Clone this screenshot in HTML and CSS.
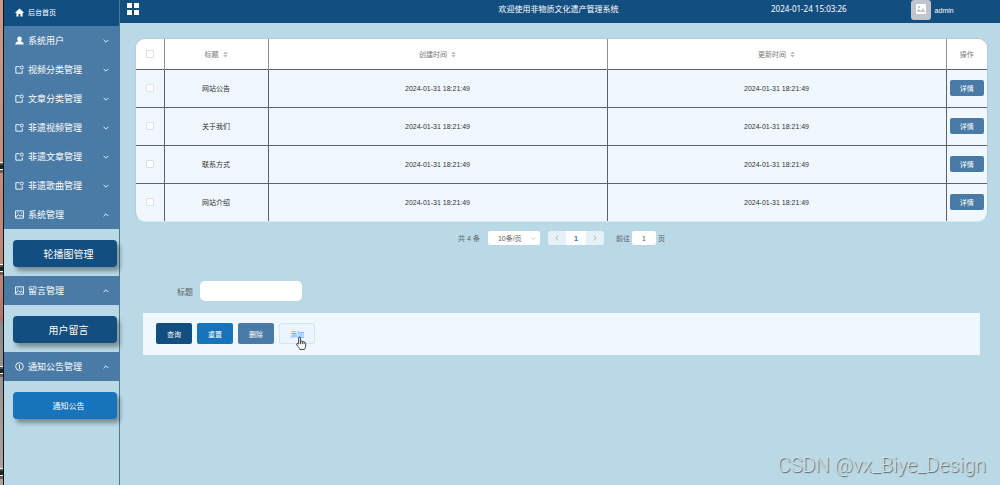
FILE: index.html
```
<!DOCTYPE html>
<html lang="zh-CN">
<head>
<meta charset="utf-8">
<meta name="viewport" content="width=device-width, initial-scale=1">
<title>非物质文化遗产管理系统</title>
<link rel="stylesheet" href="styles.css">
</head>
<body>
<svg class="sprite" aria-hidden="true">
  <symbol id="home" viewBox="0 0 16 16"><path fill="currentColor" d="M8 1 0.8 7.6V9H2.500V15H6.300V10.500H9.700V15H13.500V9H15.200V7.600Z"/></symbol>
  <symbol id="user" viewBox="0 0 16 16"><path fill="currentColor" d="M8 1a4 4 0 0 1 4 4c0 2-.8 3.300-2 4.200 3 .8 5.500 2 5.500 5.800H.5C.5 11.200 3 10 6 9.200 4.800 8.300 4 7 4 5a4 4 0 0 1 4-4Z"/></symbol>
  <symbol id="box" viewBox="0 0 16 16"><path fill="none" stroke="currentColor" stroke-width="1.600" d="M8 3H1.500V14.500H13V9.500"/><circle cx="12" cy="4.500" r="2.700" fill="none" stroke="currentColor" stroke-width="1.600"/></symbol>
  <symbol id="pic" viewBox="0 0 16 16"><path fill="none" stroke="currentColor" stroke-width="1.600" d="M1 1.500H15V14.500H1ZM1.500 12.500 6 8 9 11 11.500 9 14.500 12M4 5H6"/><circle cx="11" cy="5.500" r="1" fill="currentColor"/></symbol>
  <symbol id="info" viewBox="0 0 16 16"><circle cx="8" cy="8" r="6.800" fill="none" stroke="currentColor" stroke-width="1.600"/><path stroke="currentColor" stroke-width="1.800" d="M8 4V12.500"/></symbol>
  <symbol id="down" viewBox="0 0 10 10"><path fill="none" stroke="currentColor" stroke-width="1.400" d="M1 3 5 7 9 3"/></symbol>
  <symbol id="up" viewBox="0 0 10 10"><path fill="none" stroke="currentColor" stroke-width="1.400" d="M1 7 5 3 9 7"/></symbol>
  <symbol id="sort" viewBox="0 0 10 14"><path fill="currentColor" d="M5 1 9.500 6H.5ZM5 13 .5 8H9.500Z"/></symbol>
</svg>
<div class="app">
  <div class="edge"></div>
  <nav class="sidebar">
    <a class="home" href="#"><svg class="icon"><use href="#home"/></svg>后台首页</a>
    <button class="menu"><svg class="icon"><use href="#user"/></svg><span>系统用户</span><svg class="arrow"><use href="#down"/></svg></button>
    <button class="menu"><svg class="icon"><use href="#box"/></svg><span>视频分类管理</span><svg class="arrow"><use href="#down"/></svg></button>
    <button class="menu"><svg class="icon"><use href="#box"/></svg><span>文章分类管理</span><svg class="arrow"><use href="#down"/></svg></button>
    <button class="menu"><svg class="icon"><use href="#box"/></svg><span>非遗视频管理</span><svg class="arrow"><use href="#down"/></svg></button>
    <button class="menu"><svg class="icon"><use href="#box"/></svg><span>非遗文章管理</span><svg class="arrow"><use href="#down"/></svg></button>
    <button class="menu"><svg class="icon"><use href="#box"/></svg><span>非遗歌曲管理</span><svg class="arrow"><use href="#down"/></svg></button>
    <button class="menu"><svg class="icon"><use href="#pic"/></svg><span>系统管理</span><svg class="arrow"><use href="#up"/></svg></button>
    <div class="sub"><a href="#">轮播图管理</a></div>
    <button class="menu"><svg class="icon"><use href="#pic"/></svg><span>留言管理</span><svg class="arrow"><use href="#up"/></svg></button>
    <div class="sub"><a href="#">用户留言</a></div>
    <button class="menu"><svg class="icon"><use href="#info"/></svg><span>通知公告管理</span><svg class="arrow"><use href="#up"/></svg></button>
    <div class="sub"><a class="active" href="#">通知公告</a></div>
  </nav>
  <div class="page">
    <header class="top">
      <button class="grid" aria-label="菜单"><i></i><i></i><i></i><i></i></button>
      <span class="welcome">欢迎使用非物质文化遗产管理系统</span>
      <time class="clock">2024-01-24 15:03:26</time>
      <div class="account">
        <svg class="avatar" viewBox="0 0 20 20"><rect width="20" height="20" rx="3" fill="#c0c4cc"/><rect x="5" y="4" width="10" height="10" rx="1" fill="#fff"/><path fill="#c0c4cc" d="M6 12V10.500L8 9 10 11 12 8 14 11V12ZM7 6H9V8H7Z"/></svg>
        <span>admin</span>
      </div>
    </header>
    <main class="content">
      <div class="table-box">
        <table>
          <colgroup><col class="c-check"><col class="c-title"><col><col><col class="c-op"></colgroup>
          <thead><tr>
            <th><input type="checkbox" aria-label="全选"></th>
            <th>标题<svg class="sort"><use href="#sort"/></svg></th>
            <th>创建时间<svg class="sort"><use href="#sort"/></svg></th>
            <th>更新时间<svg class="sort"><use href="#sort"/></svg></th>
            <th>操作</th>
          </tr></thead>
          <tbody>
            <tr><td><input type="checkbox" aria-label="网站公告"></td><td>网站公告</td><td>2024-01-31 18:21:49</td><td>2024-01-31 18:21:49</td><td><button class="detail">详情</button></td></tr>
            <tr><td><input type="checkbox" aria-label="关于我们"></td><td>关于我们</td><td>2024-01-31 18:21:49</td><td>2024-01-31 18:21:49</td><td><button class="detail">详情</button></td></tr>
            <tr><td><input type="checkbox" aria-label="联系方式"></td><td>联系方式</td><td>2024-01-31 18:21:49</td><td>2024-01-31 18:21:49</td><td><button class="detail">详情</button></td></tr>
            <tr><td><input type="checkbox" aria-label="网站介绍"></td><td>网站介绍</td><td>2024-01-31 18:21:49</td><td>2024-01-31 18:21:49</td><td><button class="detail">详情</button></td></tr>
          </tbody>
        </table>
      </div>
      <div class="pager">
        <span>共 4 条</span>
        <div class="size"><select aria-label="每页条数"><option>10条/页</option></select><svg class="caret"><use href="#down"/></svg></div>
        <div class="pages">
          <button aria-label="上一页"><svg viewBox="0 0 10 10"><path d="M7 1 3 5 7 9"/></svg></button>
          <button class="current">1</button>
          <button aria-label="下一页"><svg viewBox="0 0 10 10"><path d="M3 1 7 5 3 9"/></svg></button>
        </div>
        <label class="jump">前往<input type="text" value="1">页</label>
      </div>
      <form class="search">
        <label for="title">标题</label>
        <input id="title" type="text">
      </form>
      <div class="actions">
        <button class="btn query">查询</button>
        <button class="btn reset">重置</button>
        <button class="btn remove">删除</button>
        <button class="btn add">添加<svg class="hand" viewBox="0 0 20 24"><path fill="#fff" stroke="#333" stroke-width="1.600" stroke-linejoin="round" d="M6 14V3.500C6 1 9 1 9 3.500V10C9.500 8 12 8 12.200 10 13 8.500 15 9 15.200 11 16.500 10 18 11 18 13V17C18 20 16.500 21 16 23H8C7.500 21 5 18.500 3 15.500 1.500 13 3.500 11.500 6 14ZM9 10V14M12.200 10V14M15.200 11V14"/></svg></button>
      </div>
    </main>
  </div>
  <div class="watermark">CSDN @vx_Biye_Design</div>
</div>
</body>
</html>
```
FILE: styles.css
```
* { box-sizing: border-box; }
body {
  margin: 0;
  background: #b8d9e5;
  color: #303133;
  font-family: "Liberation Sans", "Noto Sans CJK SC", sans-serif;
  font-size: 7px;
}
button, input, select { font: inherit; color: inherit; margin: 0; padding: 0; border: 0; }
a { color: inherit; text-decoration: none; }
.sprite { display: none; }
.app { display: flex; min-height: 100vh; }
.edge {
  width: 4px;
  padding-top: 162px;
  border-right: 1px solid #111;
  background:
    linear-gradient(#fff 0 1px, #555 1px 3px, #222 3px 7px, #fff 7px 8px, #6b5a55 8px 11px, transparent 11px) 0 0 / 100% 102px content-box,
    linear-gradient(#c99c8c 0%, #b98478 60%, #a8756c 66%, #8c8c8c 67%, #b0a4a0 100%);
}
.sidebar { width: 116px; border-right: 1px solid #52788c; color: #fff; }
.home { display: flex; align-items: center; height: 26px; padding: 0 11px 2px; background: #134e80; font-size: 7px; }
.menu { display: flex; align-items: center; width: 100%; height: 29px; padding: 0 10px 0 11px; background: #4a7ba6; font-size: 9px; text-align: left; }
.icon { width: 9px; height: 9px; margin-right: 4px; }
.arrow { width: 6px; height: 6px; margin-left: auto; }
.sub { padding: 11px 2px 9px 9px; }
.sub a {
  display: flex; align-items: center; justify-content: center;
  height: 27px; padding-left: 7px; border-radius: 4px;
  background: #134e80; box-shadow: 3px 4px 4px rgba(0, 0, 0, .35); font-size: 10px;
}
.sub .active { background: #1774ba; font-size: 8px; }
.page { flex: 1; min-width: 0; }
.top {
  display: grid; grid-template-columns: 43fr 14fr 30fr 13fr; align-items: start;
  height: 23px; background: #134e80; color: #fff; font-size: 8px;
}
.grid { display: grid; grid-template-columns: 5px 5px; grid-auto-rows: 5px; gap: 2px; margin: 3px 0 0 7px; background: none; }
.grid i { background: #fff; }
.welcome { padding-top: 3px; white-space: nowrap; }
.clock { justify-self: end; padding: 4px 39px 0 0; font-family: "Noto Sans", sans-serif; line-height: 10px; }
.account { display: flex; align-items: center; gap: 4px; padding-left: 25px; font-size: 7px; }
.avatar { width: 20px; height: 20px; }
.content { padding: 15px 12px 0 15px; }
.table-box { overflow: hidden; border: 1px solid #bcc8d0; border-bottom-color: #d8e6ee; border-radius: 10px; background: #f0f8ff; }
table { width: 100%; table-layout: fixed; border-collapse: collapse; text-align: center; }
.c-check { width: 28px; }
.c-title { width: 104px; }
.c-op { width: 41px; }
th, td { padding: 0; border-right: 1px solid #5b626a; }
th:last-child, td:last-child { border-right: 0; }
th { height: 30px; background: #fff; color: #77797d; font-weight: 400; border-color: #8e9196; }
td { height: 38px; border-top: 1px solid #5b626a; }
.sort { width: 5px; height: 7px; margin-left: 4px; color: #b4b9c2; vertical-align: middle; }
input[type="checkbox"] { appearance: none; width: 8px; height: 8px; border: 1px solid #dcdfe6; border-radius: 1px; background: #fff; vertical-align: middle; }
.detail { width: 34px; height: 16px; border-radius: 2px; background: #4a7ba6; color: #fff; }
.pager { display: flex; align-items: center; justify-content: center; gap: 8px; height: 14px; margin-top: 9px; color: #606266; }
.size { position: relative; }
.size select { appearance: none; width: 52px; height: 14px; padding-left: 10px; border-radius: 2px; background: #fff; }
.caret { position: absolute; right: 4px; top: 5px; width: 5px; height: 5px; color: #b4b9c2; }
.pages { display: flex; overflow: hidden; border-radius: 2px; }
.pages button { width: 18px; height: 14px; background: #e4f1f6; }
.pages .current { width: 20px; background: #fff; color: #1774d1; font-weight: 700; }
.pages svg { width: 6px; height: 6px; fill: none; stroke: #a5acb5; stroke-width: 1.500; }
.jump { display: flex; align-items: center; gap: 2px; margin-left: 4px; }
.jump input { width: 24px; height: 14px; border-radius: 2px; text-align: center; background: #fff; }
.search { display: flex; align-items: center; gap: 7px; margin: 36px 0 0 42px; color: #606266; font-size: 8px; }
.search input { width: 102px; height: 20px; border-radius: 5px; background: #fff; padding: 0 6px; }
.actions { display: flex; gap: 5px; margin: 12px 8px 0; padding: 10px 13px 11px; background: #f0f8ff; }
.btn { width: 36px; height: 21px; border-radius: 2px; color: #fff; }
.query { background: #134e80; }
.reset { background: #1774ba; }
.remove { background: #4a7ba6; }
.add { position: relative; border: 1px solid #d0e6fb; background: #ecf5ff; color: #409eff; }
.hand { position: absolute; left: 15px; top: 12px; width: 12px; height: 14px; }
.watermark { position: absolute; right: 14px; bottom: 9px; color: #d5dde0; font-family: Roboto, "Liberation Sans", sans-serif; font-size: 20px; font-weight: 300; line-height: 22px; text-shadow: 1px 1px 1px #59666c; }
```
